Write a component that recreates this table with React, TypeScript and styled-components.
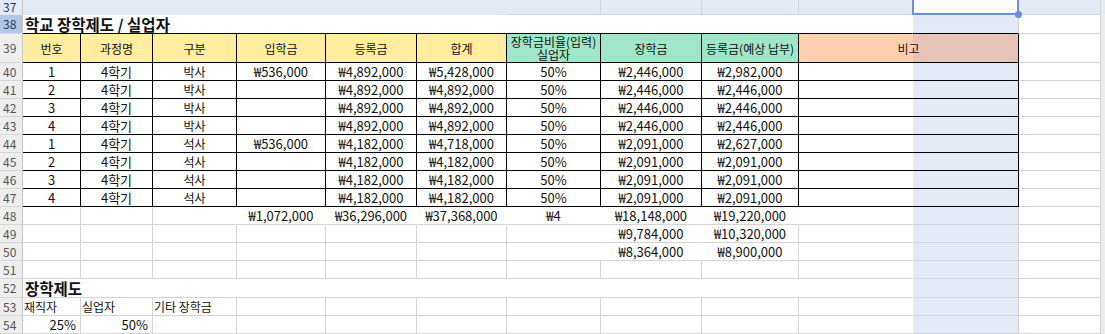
import styled, { createGlobalStyle } from 'styled-components';

const COLS = '23px 58px 72px 84px 89px 91px 90px 94px 101px 97px 114px 106px 82px 4px';

const GRID = '#d4d4d4';
const BLACK = '#000';
const NONE = 'transparent';
const TINT = '#e3e9f5';
const TINT_LINE = '#cfd5e0';
const YELLOW = '#ffeda0';
const GREEN = '#a0e6c8';
const PEACH = '#ffcfb0';
const PEACH_TINT = '#e6c4b8';
const STRIP = '#ececec';

const GlobalStyle = createGlobalStyle`
  html, body {
    margin: 0;
    padding: 0;
    background: #fff;
    overflow: hidden;
  }
  body {
    font-family: "Noto Sans CJK KR", "Noto Sans", sans-serif;
    color: #111;
  }
`;

const Sheet = styled.div`
  width: 1105px;
  height: 334px;
  overflow: hidden;
  display: flex;
  flex-direction: column;
`;

const Row = styled.div<{ $h: number }>`
  display: grid;
  grid-template-columns: ${COLS};
  height: ${(p) => p.$h}px;
  flex: none;
`;

const RowNum = styled.div<{ $tone?: 'cur' | 'sel' }>`
  box-sizing: border-box;
  background: ${(p) => (p.$tone === 'sel' ? '#b4c6e7' : p.$tone === 'cur' ? TINT : '#eeeeee')};
  color: ${(p) => (p.$tone ? '#2b3a55' : '#555')};
  font-size: 12px;
  line-height: 12px;
  border-right: 1px solid #c6c6c6;
  border-bottom: 1px solid ${(p) => (p.$tone === 'cur' ? NONE : '#d6d6d6')};
  display: flex;
  align-items: center;
  padding-left: 3px;
`;

type Kind = 'text' | 'num' | 'title' | 'head';
type Align = 'left' | 'center' | 'right';

const Cell = styled.div<{
  $span: number;
  $align: Align;
  $bg: string;
  $r: string;
  $b: string;
  $kind: Kind;
}>`
  position: relative;
  grid-column: span ${(p) => p.$span};
  box-sizing: border-box;
  min-width: 0;
  background: ${(p) => p.$bg};
  border-right: 1px solid ${(p) => p.$r};
  border-bottom: 1px solid ${(p) => p.$b};
  display: flex;
  align-items: center;
  justify-content: ${(p) => (p.$align === 'left' ? 'flex-start' : p.$align === 'right' ? 'flex-end' : 'center')};
  text-align: center;
  padding: ${(p) => (p.$kind === 'title' ? '0 2px' : p.$align === 'right' ? '0 4px 0 2px' : '0 1px')};
  font-size: ${(p) => (p.$kind === 'title' ? '15.5px' : p.$kind === 'num' ? '13px' : '12px')};
  font-weight: ${(p) => (p.$kind === 'title' ? 700 : 400)};
  line-height: ${(p) => (p.$kind === 'head' ? '13px' : p.$kind === 'title' ? '16px' : '1')};
  white-space: pre;
  color: #111;
`;

const Cursor = styled.div`
  position: absolute;
  left: -1px;
  right: -1px;
  top: -3px;
  bottom: -1px;
  border: 2px solid #6b8fdc;
  z-index: 3;
  pointer-events: none;
`;

const Handle = styled.span`
  position: absolute;
  right: -5px;
  bottom: -5px;
  width: 7px;
  height: 7px;
  border-radius: 50%;
  background: #6b8fdc;
`;

type Spec = {
  t?: string;
  span?: number;
  align?: Align;
  bg?: string;
  r?: string;
  b?: string;
  kind?: Kind;
  cursor?: boolean;
};

type RowSpec = { n: number; h: number; tone?: 'cur' | 'sel'; cells: Spec[] };

const isNum = (t: string) => /^[₩0-9]/.test(t);

const strip = (tone?: 'cur'): Spec => ({ bg: tone ? TINT : STRIP, r: NONE, b: tone ? NONE : STRIP });
const kCol = (b = TINT_LINE): Spec => ({ bg: TINT, r: GRID, b });
const plain = (t = '', extra: Spec = {}): Spec => ({ t, ...extra });

// 비고 (J:K merged) - peach until column K, then the selection tint
const remarkBg = (base: string, tinted: string) =>
  `linear-gradient(to right, ${base} 114px, ${tinted} 114px)`;

const bodyData: string[][] = [
  ['1', '4학기', '박사', '₩536,000', '₩4,892,000', '₩5,428,000', '50%', '₩2,446,000', '₩2,982,000'],
  ['2', '4학기', '박사', '', '₩4,892,000', '₩4,892,000', '50%', '₩2,446,000', '₩2,446,000'],
  ['3', '4학기', '박사', '', '₩4,892,000', '₩4,892,000', '50%', '₩2,446,000', '₩2,446,000'],
  ['4', '4학기', '박사', '', '₩4,892,000', '₩4,892,000', '50%', '₩2,446,000', '₩2,446,000'],
  ['1', '4학기', '석사', '₩536,000', '₩4,182,000', '₩4,718,000', '50%', '₩2,091,000', '₩2,627,000'],
  ['2', '4학기', '석사', '', '₩4,182,000', '₩4,182,000', '50%', '₩2,091,000', '₩2,091,000'],
  ['3', '4학기', '석사', '', '₩4,182,000', '₩4,182,000', '50%', '₩2,091,000', '₩2,091,000'],
  ['4', '4학기', '석사', '', '₩4,182,000', '₩4,182,000', '50%', '₩2,091,000', '₩2,091,000'],
];

const headers: [string, string][] = [
  ['번호', YELLOW],
  ['과정명', YELLOW],
  ['구분', YELLOW],
  ['입학금', YELLOW],
  ['등록금', YELLOW],
  ['합계', YELLOW],
  ['장학금비율(입력)\n실업자', GREEN],
  ['장학금', GREEN],
  ['등록금(예상 납부)', GREEN],
];

const rows: RowSpec[] = [
  {
    n: 37,
    h: 15,
    tone: 'cur',
    cells: [
      { span: 6, bg: TINT, r: NONE, b: NONE },
      { bg: TINT, r: GRID, b: GRID },
      { bg: TINT, r: GRID, b: GRID },
      { bg: TINT, r: GRID, b: GRID },
      { bg: TINT, r: NONE, b: GRID },
      { bg: '#fff', r: NONE, b: NONE, cursor: true },
      { bg: TINT, r: GRID, b: GRID },
      strip('cur'),
    ],
  },
  {
    n: 38,
    h: 19,
    tone: 'sel',
    cells: [
      { t: '학교 장학제도 / 실업자', span: 10, align: 'left', kind: 'title', r: NONE, b: BLACK },
      kCol(BLACK),
      plain(),
      strip(),
    ],
  },
  {
    n: 39,
    h: 29,
    cells: [
      ...headers.map(([t, bg]) => ({ t, bg, r: BLACK, b: BLACK, kind: 'head' as Kind })),
      { t: '비고', span: 2, bg: remarkBg(PEACH, PEACH_TINT), r: BLACK, b: BLACK, kind: 'head' },
      plain(),
      strip(),
    ],
  },
  ...bodyData.map((vals, i) => ({
    n: 40 + i,
    h: 18,
    cells: [
      ...vals.map((t) => ({ t, r: BLACK, b: BLACK })),
      { span: 2, bg: remarkBg('#fff', TINT), r: BLACK, b: BLACK },
      plain(),
      strip(),
    ],
  })),
  {
    n: 48,
    h: 18,
    cells: [
      plain(),
      plain(),
      plain('', { r: NONE }),
      plain('₩1,072,000', { r: NONE }),
      plain('₩36,296,000', { r: NONE }),
      plain('₩37,368,000', { r: NONE }),
      plain('₩4', { r: NONE }),
      plain('₩18,148,000', { r: NONE }),
      plain('₩19,220,000', { r: NONE }),
      plain('', { r: NONE }),
      kCol(),
      plain(),
      strip(),
    ],
  },
  {
    n: 49,
    h: 18,
    cells: [
      plain(), plain(), plain(), plain(), plain(), plain(),
      plain('', { r: NONE }),
      plain('₩9,784,000', { r: NONE }),
      plain('₩10,320,000'),
      plain('', { r: NONE }),
      kCol(), plain(), strip(),
    ],
  },
  {
    n: 50,
    h: 18,
    cells: [
      plain(), plain(), plain(), plain(), plain(), plain(),
      plain('', { r: NONE }),
      plain('₩8,364,000', { r: NONE }),
      plain('₩8,900,000'),
      plain('', { r: NONE }),
      kCol(), plain(), strip(),
    ],
  },
  {
    n: 51,
    h: 18,
    cells: [
      plain(), plain(), plain(), plain(), plain(), plain(), plain(), plain(), plain(),
      plain('', { r: NONE }),
      kCol(), plain(), strip(),
    ],
  },
  {
    n: 52,
    h: 19,
    cells: [
      { t: '장학제도', span: 10, align: 'left', kind: 'title', r: NONE, b: GRID },
      kCol(), plain(), strip(),
    ],
  },
  {
    n: 53,
    h: 18,
    cells: [
      plain('재직자', { align: 'left' }),
      plain('실업자', { align: 'left' }),
      plain('기타 장학금', { align: 'left' }),
      plain(), plain(), plain(), plain(), plain(), plain(),
      plain('', { r: NONE }),
      kCol(), plain(), strip(),
    ],
  },
  {
    n: 54,
    h: 18,
    cells: [
      plain('25%', { align: 'right' }),
      plain('50%', { align: 'right' }),
      plain(), plain(), plain(), plain(), plain(), plain(), plain(),
      plain('', { r: NONE }),
      kCol(), plain(), strip(),
    ],
  },
];

export default function App() {
  return (
    <>
      <GlobalStyle />
      <Sheet>
        {rows.map((row) => (
          <Row key={row.n} $h={row.h}>
            <RowNum $tone={row.tone}>{row.n}</RowNum>
            {row.cells.map((c, i) => {
              const text = c.t ?? '';
              const kind: Kind = c.kind ?? (isNum(text) || text.endsWith('%') ? 'num' : 'text');
              return (
                <Cell
                  key={i}
                  $span={c.span ?? 1}
                  $align={c.align ?? 'center'}
                  $bg={c.bg ?? '#fff'}
                  $r={c.r ?? GRID}
                  $b={c.b ?? GRID}
                  $kind={kind}
                >
                  {text}
                  {c.cursor && (
                    <Cursor>
                      <Handle />
                    </Cursor>
                  )}
                </Cell>
              );
            })}
          </Row>
        ))}
      </Sheet>
    </>
  );
}
